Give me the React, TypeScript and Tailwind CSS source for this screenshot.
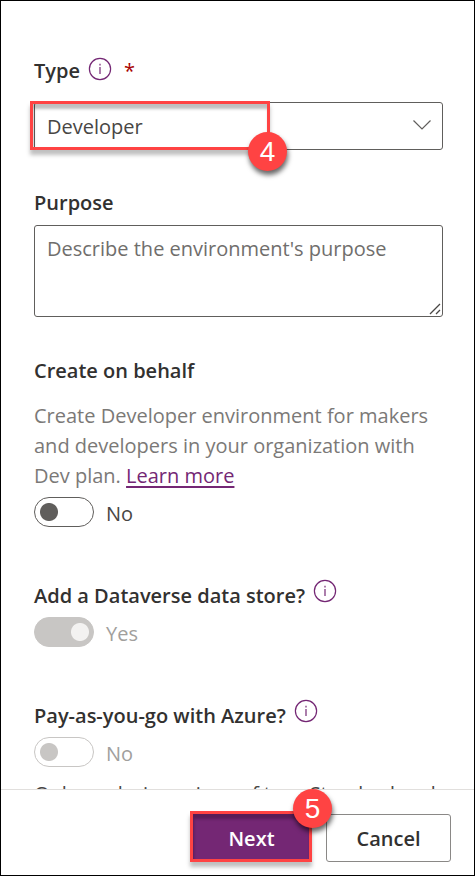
import React from "react";

function InfoIcon({ label }: { label: string }) {
  return (
    <button type="button" aria-label={label} className="size-6 shrink-0 text-[#742774]">
      <svg viewBox="0 0 24 24" className="size-6" fill="none" stroke="currentColor" strokeWidth="1.2">
        <circle cx="12" cy="12" r="10.6" />
        <path d="M12 10v7" />
        <path d="M12 6.8v1.6" />
      </svg>
    </button>
  );
}

function Toggle({ id, text, on, disabled }: { id: string; text: string; on?: boolean; disabled?: boolean }) {
  return (
    <div className="flex h-[30px] items-center gap-3">
      <input
        id={id}
        type="checkbox"
        role="switch"
        defaultChecked={on}
        disabled={disabled}
        className="h-[30px] w-[60px] shrink-0 appearance-none rounded-full border border-[#605e5c] bg-white bg-[radial-gradient(circle_at_14px_14px,#605e5c_8.5px,transparent_9.5px)] checked:border-[#c8c6c4] checked:bg-[#c8c6c4] checked:bg-[radial-gradient(circle_at_45px_14px,#f3f2f1_8.5px,transparent_9.5px)] disabled:border-[#c8c6c4] disabled:not-checked:bg-[radial-gradient(circle_at_14px_14px,#c8c6c4_8.5px,transparent_9.5px)]"
      />
      <label htmlFor={id} className={disabled ? "pt-1 text-[#a19f9d]" : "pt-1"}>
        {text}
      </label>
    </div>
  );
}

function StepBadge({ n, place }: { n: number; place: string }) {
  return (
    <span
      className={`absolute flex size-[39px] items-center justify-center rounded-full bg-[#ff4343] font-['Liberation_Sans',sans-serif] text-[28px] leading-none text-white shadow-[1px_4px_5px_rgba(0,0,0,0.6)] ${place}`}
    >
      {n}
    </span>
  );
}

const heading = "font-semibold text-[#323130]";
const highlight =
  "pointer-events-none absolute border-[3px] border-[#ff4343] shadow-[0_5px_4px_rgba(0,0,0,0.25),inset_1px_5px_3px_rgba(0,0,0,0.25)]";

export default function App() {
  return (
    <div className="flex h-screen flex-col border border-black bg-white font-['Open_Sans','Noto_Sans',sans-serif] text-[20px] leading-[30px] text-[#484644]">
      <main className="min-h-0 flex-1 overflow-hidden pr-[31px] pl-[33px]">
        <div className="mt-[55px] flex items-center">
          <label htmlFor="type" className={heading}>Type</label>
          <span className="mb-1 ml-2 flex"><InfoIcon label="About type" /></span>
          <span className="ml-3 text-[#a80000]">*</span>
        </div>
        <div className="relative mt-4">
          <select
            id="type"
            className="block h-12 w-full appearance-none rounded-[3px] border border-[#605e5c] bg-white px-3 pt-0.5"
          >
            <option>Developer</option>
          </select>
          <svg viewBox="0 0 20 12" className="pointer-events-none absolute top-[17px] right-[11px] h-3 w-5" fill="none" stroke="#605e5c" strokeWidth="1.2">
            <path d="M1.5 1.5l8.5 8.5 8.5-8.5" />
          </svg>
          <div className={`${highlight} -top-px bottom-0 -left-1 w-60`}>
            <StepBadge n={4} place="-right-5 -bottom-6" />
          </div>
        </div>

        <label htmlFor="purpose" className={`mt-[38px] block ${heading}`}>Purpose</label>
        <div className="relative mt-[7px]">
          <textarea
            id="purpose"
            placeholder="Describe the environment's purpose"
            className="block h-[92px] w-full resize-none rounded-[3px] border border-[#605e5c] px-3 py-2 placeholder:text-[#706e6c]"
          />
          <svg viewBox="0 0 12 12" className="pointer-events-none absolute right-0.5 bottom-0.5 size-3" fill="none" stroke="#484644" strokeWidth="1.3">
            <path d="M1 11L11 1M7 11l4-4" />
          </svg>
        </div>

        <h2 className={`mt-[39px] ${heading}`}>Create on behalf</h2>
        <p className="mt-[15px] text-[#7b7977]">
          Create Developer environment for makers and developers in your organization with Dev plan.{" "}
          <a href="#learn" className="text-[#742774] underline decoration-2 underline-offset-3">Learn more</a>
        </p>
        <div className="mt-1.5"><Toggle id="behalf" text="No" /></div>

        <div className="mt-[54px] flex">
          <label htmlFor="dataverse" className={heading}>Add a Dataverse data store?</label>
          <span className="-mt-0.5 ml-2"><InfoIcon label="About Dataverse" /></span>
        </div>
        <div className="mt-1.5"><Toggle id="dataverse" text="Yes" on disabled /></div>

        <div className="mt-[54px] flex">
          <label htmlFor="azure" className={heading}>Pay-as-you-go with Azure?</label>
          <span className="-mt-0.5 ml-2"><InfoIcon label="About pay-as-you-go" /></span>
        </div>
        <div className="mt-1.5"><Toggle id="azure" text="No" disabled /></div>
        <p className="mt-3">Only works in regions of type Standard and linked subscriptions.</p>
      </main>
      <footer className="flex h-[86px] shrink-0 items-start justify-end gap-[15px] border-t border-[#e1dfdd] pt-6 pr-[23px]">
        <div className="relative">
          <button type="button" className="block h-12 w-[119px] bg-[#742774] pt-0.5 font-semibold text-white">Next</button>
          <div className={`${highlight} -top-[3px] bottom-0 -left-0.5 -right-px`}>
            <StepBadge n={5} place="-right-[23px] -top-[25px]" />
          </div>
        </div>
        <button type="button" className="h-12 w-[125px] rounded-[3px] border border-[#8a8886] pt-0.5 font-semibold text-[#323130]">Cancel</button>
      </footer>
    </div>
  );
}
